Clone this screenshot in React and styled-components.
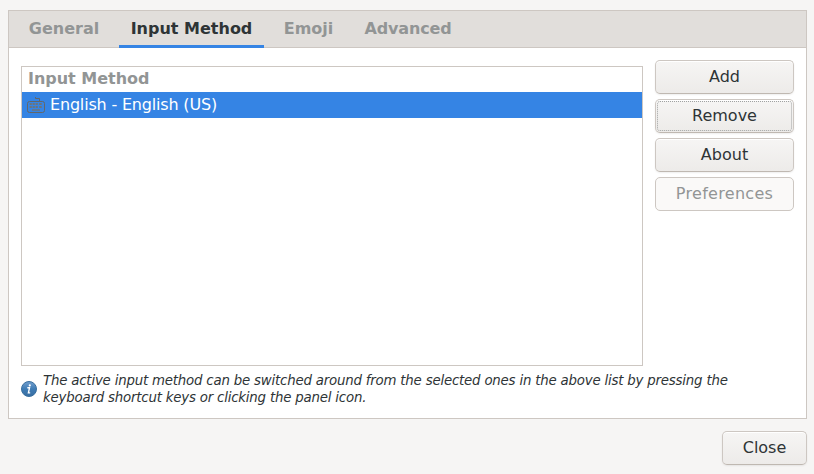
import React from "react";
import styled, { createGlobalStyle } from "styled-components";

const Global = createGlobalStyle`
  * { box-sizing: border-box; }
  body {
    margin: 0;
    background: #f6f5f4;
    color: #2e3436;
    font: 16px/20px "DejaVu Sans", sans-serif;
  }
`;

const Dialog = styled.main`
  width: 814px;
  height: 474px;
  padding: 10px 7px 9px 8px;
  display: flex;
  flex-direction: column;
  gap: 12px;
`;

const Notebook = styled.section`
  height: 409px;
  display: flex;
  flex-direction: column;
  background: #fff;
  border: 1px solid #cdc7c2;
`;

const Tabs = styled.nav`
  display: flex;
  height: 37px;
  padding-left: 5px;
  gap: 5px;
  background: #e1dedb;
  box-shadow: inset 0 -1px #cdc7c2;
`;

const Tab = styled.button`
  width: ${(p) => p.$width}px;
  height: 37px;
  padding: 0 0 2px;
  border: 0;
  background: none;
  color: ${(p) => (p.$active ? "#2e3436" : "#929595")};
  box-shadow: ${(p) => (p.$active ? "inset 0 -3px #3584e4" : "none")};
  font: bold 16px/20px "DejaVu Sans", sans-serif;
  letter-spacing: ${(p) => p.$tracking || 0}px;
  white-space: nowrap;
`;

const Page = styled.div`
  flex: 1;
  padding: 12px;
  display: flex;
  flex-direction: column;
`;

const Columns = styled.div`
  display: flex;
  gap: 12px;
`;

const List = styled.div`
  width: 622px;
  height: 300px;
  margin-top: 6px;
  border: 1px solid #cdc7c2;
`;

const ListHeader = styled.div`
  height: 25px;
  padding: 2px 6px 0;
  color: #929595;
  font-weight: bold;
  letter-spacing: -0.02px;
`;

const Row = styled.div`
  display: flex;
  align-items: center;
  height: 26px;
  padding: 0 4px 0 5px;
  gap: 5px;
  background: #3584e4;
  color: #fff;
  letter-spacing: -0.18px;
`;

const Actions = styled.div`
  width: 139px;
  display: flex;
  flex-direction: column;
  gap: 5px;
`;

const Button = styled.button`
  width: ${(p) => p.$width || 139}px;
  height: 34px;
  padding: 0;
  border: 1px solid #cdc7c2;
  border-bottom-color: #bfb8b1;
  border-radius: 5px;
  background: linear-gradient(#f6f5f4, #edebe9);
  box-shadow: inset 0 1px #fff, 0 1px 2px rgba(0, 0, 0, 0.07);
  color: #2e3436;
  font: 16px/20px "DejaVu Sans", sans-serif;
  outline: ${(p) => (p.$focused ? "1px dotted #a0a2a2" : "none")};
  outline-offset: -3px;

  &:disabled {
    border-color: #cdc7c2;
    background: #faf9f8;
    box-shadow: none;
    color: #929595;
    letter-spacing: 0.3px;
  }
`;

const Note = styled.div`
  display: flex;
  align-items: center;
  gap: 6px;
  margin-top: 6px;
`;

const NoteText = styled.p`
  margin: 0;
  white-space: nowrap;
  font: italic 13.33px/17px "DejaVu Sans", sans-serif;
  letter-spacing: -0.195px;
`;

const Footer = styled.footer`
  display: flex;
  justify-content: flex-end;
`;

const KeyboardIcon = () => (
  <svg width="18" height="18" viewBox="0 0 18 18" fill="none" stroke="#62676a">
    <rect x="0.5" y="5.5" width="17" height="11" rx="2" />
    <path d="M8.5 1v1.5h4V5" />
    <path
      d="M2.6 7h2.2v2H2.6zM5.6 7h2.2v2H5.6zM8.6 7h2.2v2H8.6zM12.2 7h2.5v2h-2.5zM2.6 10h2.2v2H2.6zM5.6 10h2.2v2H5.6zM8.6 10h2.2v2H8.6zM12.2 10h2.5v2h-2.5zM5 13.2h8v1.6H5z"
      fill="#6d747b"
      stroke="none"
    />
  </svg>
);

const InfoIcon = () => (
  <svg width="16" height="16" viewBox="0 0 16 16">
    <defs>
      <linearGradient id="info-fill" x2="0" y2="1">
        <stop stopColor="#729fcf" />
        <stop offset="0.5" stopColor="#3f7cb5" />
        <stop offset="1" stopColor="#386da0" />
      </linearGradient>
    </defs>
    <circle cx="8" cy="8" r="7.5" fill="url(#info-fill)" stroke="#396f9f" />
    <circle cx="8.8" cy="4.4" r="1.1" fill="#fff" />
    <path d="M6.3 6.8h2.2L7.4 11.9h1.8" fill="none" stroke="#fff" strokeWidth="1.4" />
  </svg>
);

export default function App() {
  return (
    <>
      <Global />
      <Dialog>
        <Notebook>
          <Tabs>
            <Tab $width={100}>General</Tab>
            <Tab $width={145} $active>Input Method</Tab>
            <Tab $width={79}>Emoji</Tab>
            <Tab $width={110} $tracking={-0.15}>Advanced</Tab>
          </Tabs>
          <Page>
            <Columns>
              <List>
                <ListHeader>Input Method</ListHeader>
                <Row>
                  <KeyboardIcon />
                  English - English (US)
                </Row>
              </List>
              <Actions>
                <Button>Add</Button>
                <Button $focused>Remove</Button>
                <Button>About</Button>
                <Button disabled>Preferences</Button>
              </Actions>
            </Columns>
            <Note>
              <InfoIcon />
              <NoteText>
                The active input method can be switched around from the selected ones in the above list by pressing the
                <br />
                keyboard shortcut keys or clicking the panel icon.
              </NoteText>
            </Note>
          </Page>
        </Notebook>
        <Footer>
          <Button $width={85}>Close</Button>
        </Footer>
      </Dialog>
    </>
  );
}
